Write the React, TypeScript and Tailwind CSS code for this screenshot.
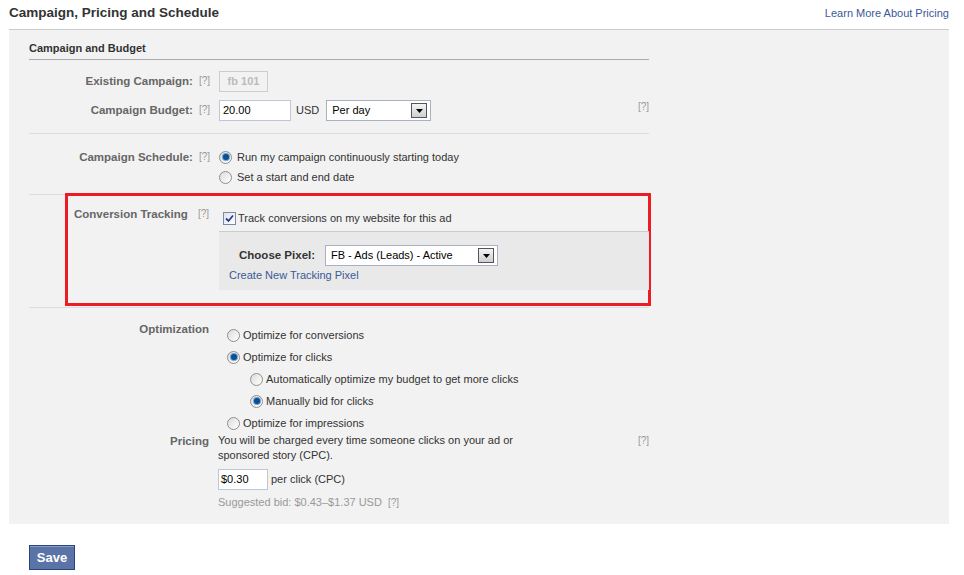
import React from "react";

const font = { fontFamily: '"Liberation Sans", Arial, sans-serif' };

function Help({ className = "" }: { className?: string }) {
  return <span className={"text-[10px] text-[#999] " + className}>[?]</span>;
}

function Radio({ checked = false }: { checked?: boolean }) {
  return (
    <span className="flex h-[13px] w-[13px] shrink-0 items-center justify-center rounded-full border border-[#8f8f8f] bg-gradient-to-br from-[#dcdcdc] to-[#ffffff]">
      {checked && (
        <span className="h-[6px] w-[6px] rounded-full bg-[#0b4f8f] shadow-[0_0_0_1px_#6aa2d6]" />
      )}
    </span>
  );
}

function Checkbox() {
  return (
    <span className="flex h-[13px] w-[13px] shrink-0 items-center justify-center border border-[#7b8aa3] bg-gradient-to-br from-[#dfe3ea] to-white">
      <svg width="9" height="9" viewBox="0 0 9 9">
        <path d="M1 4.5 L3.5 7 L8 1.5" fill="none" stroke="#21409a" strokeWidth="1.8" />
      </svg>
    </span>
  );
}

function Select({ value, width }: { value: string; width: string }) {
  return (
    <div className={"flex h-[21px] items-center justify-between border border-[#a7b1c2] bg-white pl-[5px] pr-[3px] text-[11px] text-[#000] " + width}>
      <span>{value}</span>
      <span className="flex h-[15px] w-[16px] items-center justify-center border border-[#555] bg-gradient-to-b from-[#f4f4f4] to-[#cfcfcf]">
        <svg width="7" height="4" viewBox="0 0 7 4">
          <path d="M0 0 H7 L3.5 4 Z" fill="#000" />
        </svg>
      </span>
    </div>
  );
}

function Label({ children }: { children: React.ReactNode }) {
  return (
    <div className="flex w-[182px] shrink-0 items-start justify-end gap-[6px] pr-[1px] text-[11.5px] font-bold text-[#666]">
      <span>{children}</span>
      <Help className="font-normal" />
    </div>
  );
}

function RadioRow({ checked, children, indent = false }: { checked?: boolean; children: React.ReactNode; indent?: boolean }) {
  return (
    <div className={"flex h-[22px] items-center gap-[3px] text-[11px] text-[#333] " + (indent ? "pl-[23px]" : "")}>
      <Radio checked={checked} />
      <span>{children}</span>
    </div>
  );
}

export default function App() {
  return (
    <div style={font} className="h-[575px] w-[964px] bg-white text-[#333]">
      <div className="ml-[9px] mr-[15px] flex h-[30px] items-center justify-between border-b border-[#ccc] pb-[2px]">
        <h2 className="text-[13.5px] font-bold text-[#333]">Campaign, Pricing and Schedule</h2>
        <a className="text-[11px] text-[#3b5998]">Learn More About Pricing</a>
      </div>

      <div className="ml-[9px] mr-[15px] h-[494px] bg-[#f2f2f2] pt-[9px]">
        <div className="ml-[20px] w-[620px]">
          <div className="flex h-[21px] items-center border-b border-[#aaa] pb-[2px] text-[11px] font-bold text-[#333]">
            Campaign and Budget
          </div>

          <div className="pt-[11px]">
            <div className="flex h-[21px] items-center gap-[8px]">
              <Label>Existing Campaign:</Label>
              <div className="flex h-[21px] w-[49px] items-center justify-center border border-[#ccc] text-[11px] font-bold text-[#bbb]">
                fb 101
              </div>
            </div>
            <div className="mt-[8px] flex h-[21px] items-center gap-[8px]">
              <Label>Campaign Budget:</Label>
              <div className="flex flex-1 items-center">
                <div className="flex h-[21px] w-[72px] items-center border border-[#bdc7d8] bg-white px-[3px] text-[11px] text-black">
                  20.00
                </div>
                <span className="ml-[5px] text-[11px] text-[#333]">USD</span>
                <div className="ml-[7px]">
                  <Select value="Per day" width="w-[105px]" />
                </div>
                <Help className="mb-[8px] ml-auto" />
              </div>
            </div>
          </div>

          <div className="mt-[12px] border-b border-[#ddd]" />

          <div className="pt-[13px] pb-[7px]">
            <div className="flex gap-[8px]">
              <div className="pt-[2px]">
                <Label>Campaign Schedule:</Label>
              </div>
              <div>
                <div className="flex h-[20px] items-center gap-[5px] text-[11px] text-[#333]">
                  <Radio checked />
                  <span>Run my campaign continuously starting today</span>
                </div>
                <div className="flex h-[20px] items-center gap-[5px] text-[11px] text-[#333]">
                  <Radio />
                  <span>Set a start and end date</span>
                </div>
              </div>
            </div>
          </div>
        </div>

        <div className="ml-[20px] w-[620px] border-b border-[#ddd]" />

        <div className="relative -mt-[2px] ml-[56px] h-[113px] w-[586px] border-[3px] border-[#ed1c24]">
          <div className="flex pt-[10px]">
            <div className="flex w-[151px] shrink-0 items-start justify-between pl-[6px] pr-[10px] text-[11.5px] font-bold text-[#666]">
              <span>Conversion Tracking</span>
              <Help className="font-normal" />
            </div>
            <div className="flex-1">
              <div className="flex h-[20px] items-center gap-[2px] pl-[4px] pt-[4px] text-[11px] text-[#333]">
                <Checkbox />
                <span>Track conversions on my website for this ad</span>
              </div>
              <div className="mt-[5px] mr-[-1px] h-[59px] border-t border-[#ccc] bg-[#e9e9e9] pt-[13px] pl-[10px]">
                <div className="flex items-center">
                  <span className="ml-[10px] w-[86px] text-[11.5px] font-bold text-[#333]">Choose Pixel:</span>
                  <Select value="FB - Ads (Leads) - Active" width="w-[173px]" />
                </div>
                <div className="mt-[1px] text-[11px] text-[#3b5998]">Create New Tracking Pixel</div>
              </div>
            </div>
          </div>
        </div>

        <div className="ml-[20px] mt-[1px] w-[620px] border-b border-[#ddd]" />

        <div className="ml-[20px] w-[620px] pt-[13px]">
          <div className="flex">
            <div className="w-[180px] shrink-0 text-right text-[11.5px] font-bold text-[#666]">Optimization</div>
            <div className="ml-[18px] mt-[3px]">
              <RadioRow>Optimize for conversions</RadioRow>
              <RadioRow checked>Optimize for clicks</RadioRow>
              <RadioRow indent>Automatically optimize my budget to get more clicks</RadioRow>
              <RadioRow indent checked>Manually bid for clicks</RadioRow>
              <RadioRow>Optimize for impressions</RadioRow>
            </div>
          </div>

          <div className="-mt-[1px] flex">
            <div className="w-[180px] shrink-0 text-right text-[11.5px] font-bold text-[#666]">Pricing</div>
            <div className="ml-[9px] flex-1">
              <div className="flex items-start justify-between">
                <p className="w-[320px] text-[11px] leading-[15px] text-[#333]">
                  You will be charged every time someone clicks on your ad or sponsored story (CPC).
                </p>
                <Help />
              </div>
              <div className="mt-[6px] flex items-center">
                <div className="flex h-[21px] w-[50px] items-center border border-[#bdc7d8] bg-white px-[2px] text-[11px] text-black">
                  $0.30
                </div>
                <span className="ml-[3px] text-[11px] text-[#333]">per click (CPC)</span>
              </div>
              <div className="mt-[4px] flex items-center gap-[6px] text-[11px] text-[#999]">
                <span>Suggested bid: $0.43–$1.37 USD</span>
                <Help />
              </div>
            </div>
          </div>
        </div>
      </div>

      <div className="ml-[29px] mt-[21px]">
        <button className="h-[25px] w-[46px] border border-[#29447e] bg-[#5b74a8] text-[13px] font-bold text-white shadow-[inset_0_1px_0_#8a9cc2]">
          Save
        </button>
      </div>
    </div>
  );
}
